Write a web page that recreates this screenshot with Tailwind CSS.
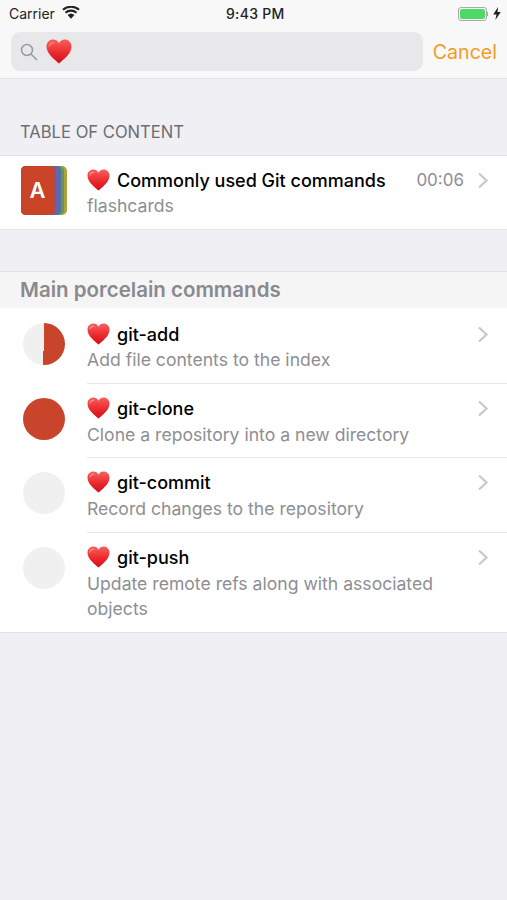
<!DOCTYPE html>
<html lang="en">
<head>
    <meta charset="UTF-8">
    <meta name="viewport" content="width=device-width, initial-scale=1.0">
    <title>Search</title>
    <script src="https://cdn.jsdelivr.net/npm/@tailwindcss/browser@4"></script>
</head>
<body class="bg-[#efeff4] h-[900px] overflow-hidden font-['Inter','Liberation_Sans',sans-serif]">
    <svg width="0" height="0" class="absolute">
        <defs>
            <linearGradient id="heartFill" x1="0" y1="0" x2="0" y2="1">
                <stop offset="0" stop-color="#f8605c"/>
                <stop offset="0.6" stop-color="#e9262a"/>
                <stop offset="1" stop-color="#d0101a"/>
            </linearGradient>
            <symbol id="heart" viewBox="0 0 24 23">
                <path d="M12 22.500C9 19.500.5 14 .5 7 .5 3 3.300.5 6.700.5c2.300 0 4.200 1.200 5.300 3.300C13.100 1.700 15 .5 17.300.5c3.400 0 6.200 2.500 6.200 6.500C23.500 14 15 19.500 12 22.500z" fill="url(#heartFill)"/>
                <path d="M3 6.500C3.500 4.500 5 3.300 7 3.300" fill="none" stroke="#fff" stroke-opacity=".35" stroke-width="1.200" stroke-linecap="round"/>
            </symbol>
        </defs>
    </svg>

    <!-- nav -->
    <header class="bg-[#f8f8f8] h-[78px]">
        <div class="h-[27px] relative flex items-center justify-between pl-[9px] pr-[6px] text-[14px] text-[#222]">
            <div class="flex items-center gap-[7px]">
                <span>Carrier</span>
                <svg width="18" height="13" viewBox="0 0 17 12" class="mb-[2px]"><path d="M8.500 12 5.300 8.400a4.800 4.800 0 0 1 6.400 0z" fill="#222"/><path d="M3.300 6.200a7.800 7.800 0 0 1 10.400 0M.9 3.400a11.700 11.700 0 0 1 15.200 0" fill="none" stroke="#222" stroke-width="2"/></svg>
            </div>
            <span class="absolute left-[226px] font-medium tracking-[0.3px]">9:43 PM</span>
            <div class="flex items-center gap-[5px]">
                <div class="flex items-center">
                    <div class="w-[29px] h-[14px] rounded-[3px] border border-[#aaa] p-[1px]"><div class="h-full rounded-[2px] bg-[#4cd964]"></div></div>
                    <div class="w-[1px] h-[4px] bg-[#aaa]"></div>
                </div>
                <svg width="8" height="13" viewBox="0 0 7 12"><path d="M4.500 0 0 7h3l-1 5 5-7.500H4z" fill="#222"/></svg>
            </div>
        </div>
        <div class="flex items-center pl-[11px] pr-[10px] gap-[10px] mt-[5px]">
            <div class="flex-1 h-[39px] bg-[#e8e8ea] rounded-[9px] flex items-center pl-[9px] gap-[8px]">
                <svg width="18" height="18" viewBox="0 0 18 18" fill="none" stroke="#9a9a9f" stroke-width="1.500"><circle cx="7" cy="7" r="5.500"/><path d="M11 11l6 6"/></svg>
                <svg class="w-[26px] h-[25px]"><use href="#heart"/></svg>
            </div>
            <span class="text-[#f59a23] text-[19.600px] leading-none mt-[3px]">Cancel</span>
        </div>
    </header>

    <main>
        <div class="h-[77px] border-t border-[#e4e4e8] flex items-end pl-[20px] pb-[13px] text-[16.600px] leading-[20px] text-[#6d6d72]">TABLE OF CONTENT</div>

        <section class="bg-white h-[75px] border-y border-[#e3e3e6] flex">
            <div class="w-[87px] flex items-start pl-[21px] pt-[10px] shrink-0">
                <div class="relative w-[46px] h-[49px]">
                    <div class="absolute inset-0 rounded-[5px] bg-[#a9a53c]"></div>
                    <div class="absolute left-0 top-0 bottom-0 w-[43px] rounded-[5px] bg-[#5a9a58]"></div>
                    <div class="absolute left-0 top-0 bottom-0 w-[40px] rounded-[5px] bg-[#5f68a8]"></div>
                    <div class="absolute left-0 top-0 bottom-0 w-[35px] rounded-[5px] bg-[#a84a62]"></div>
                    <div class="absolute left-0 top-0 bottom-0 w-[33px] rounded-[5px] bg-[#c94326] flex items-center justify-center text-white font-semibold text-[22px]">A</div>
                </div>
            </div>
            <div class="flex-1 pt-[11px]">
                <div class="flex items-center h-[26px]">
                    <svg class="w-[23px] h-[22px] mr-[7px]"><use href="#heart"/></svg>
                    <span class="text-[18px] font-medium text-black">Commonly used Git commands</span>
                    <span class="ml-auto text-[17px] text-[#8e8e93] mt-[1px]">00:06</span>
                    <svg width="12" height="17" viewBox="0 0 12 17" fill="none" stroke="#c7c7cc" stroke-width="2.200" class="ml-[13px] mr-[18px]"><path d="M2 1.500l7.500 7-7.500 7"/></svg>
                </div>
                <div class="text-[17.600px] leading-[26px] text-[#8e8e93]">flashcards</div>
            </div>
        </section>

        <div class="h-[41px]"></div>

        <div class="h-[37px] bg-[#f5f5f6] border-t border-[#e3e3e6] flex items-center pl-[20px] text-[20.500px] font-semibold text-[#8a8a8e]">Main porcelain commands</div>

        <section class="bg-white border-b border-[#e3e3e6]">
            <div class="flex h-[76px]">
                <div class="w-[87px] shrink-0 pl-[23px] pt-[15px]">
                    <div class="w-[42px] h-[42px] rounded-full bg-[conic-gradient(#c8442a_0_184deg,#f0f0f0_184deg)]"></div>
                </div>
                <div class="flex-1 pt-[13px] border-b border-[#e8e8ea]">
                    <div class="flex items-center h-[26px]">
                        <svg class="w-[23px] h-[22px] mr-[7px]"><use href="#heart"/></svg>
                        <span class="text-[18px] font-medium text-black">git-add</span>
                        <svg width="12" height="17" viewBox="0 0 12 17" fill="none" stroke="#c7c7cc" stroke-width="2.200" class="ml-auto mr-[18px]"><path d="M2 1.500l7.500 7-7.500 7"/></svg>
                    </div>
                    <div class="text-[17.600px] leading-[26px] text-[#8e8e93]">Add file contents to the index</div>
                </div>
            </div>
            <div class="flex h-[74px]">
                <div class="w-[87px] shrink-0 pl-[23px] pt-[14px]">
                    <div class="w-[42px] h-[42px] rounded-full bg-[#c8442a]"></div>
                </div>
                <div class="flex-1 pt-[11px] border-b border-[#e8e8ea]">
                    <div class="flex items-center h-[26px] mb-[1px]">
                        <svg class="w-[23px] h-[22px] mr-[7px]"><use href="#heart"/></svg>
                        <span class="text-[18px] font-medium text-black">git-clone</span>
                        <svg width="12" height="17" viewBox="0 0 12 17" fill="none" stroke="#c7c7cc" stroke-width="2.200" class="ml-auto mr-[18px]"><path d="M2 1.500l7.500 7-7.500 7"/></svg>
                    </div>
                    <div class="text-[17.600px] leading-[26px] text-[#8e8e93]">Clone a repository into a new directory</div>
                </div>
            </div>
            <div class="flex h-[75px]">
                <div class="w-[87px] shrink-0 pl-[23px] pt-[14px]">
                    <div class="w-[42px] h-[42px] rounded-full bg-[#f0f0f0]"></div>
                </div>
                <div class="flex-1 pt-[11px] border-b border-[#e8e8ea]">
                    <div class="flex items-center h-[26px] mb-[1px]">
                        <svg class="w-[23px] h-[22px] mr-[7px]"><use href="#heart"/></svg>
                        <span class="text-[18px] font-medium text-black">git-commit</span>
                        <svg width="12" height="17" viewBox="0 0 12 17" fill="none" stroke="#c7c7cc" stroke-width="2.200" class="ml-auto mr-[18px]"><path d="M2 1.500l7.500 7-7.500 7"/></svg>
                    </div>
                    <div class="text-[17.600px] leading-[26px] text-[#8e8e93]">Record changes to the repository</div>
                </div>
            </div>
            <div class="flex h-[99px]">
                <div class="w-[87px] shrink-0 pl-[23px] pt-[14px]">
                    <div class="w-[42px] h-[42px] rounded-full bg-[#f0f0f0]"></div>
                </div>
                <div class="flex-1 pt-[11px]">
                    <div class="flex items-center h-[26px] mb-[1px]">
                        <svg class="w-[23px] h-[22px] mr-[7px]"><use href="#heart"/></svg>
                        <span class="text-[18px] font-medium text-black">git-push</span>
                        <svg width="12" height="17" viewBox="0 0 12 17" fill="none" stroke="#c7c7cc" stroke-width="2.200" class="ml-auto mr-[18px]"><path d="M2 1.500l7.500 7-7.500 7"/></svg>
                    </div>
                    <div class="text-[17.600px] leading-[25px] text-[#8e8e93] pr-[60px]">Update remote refs along with associated objects</div>
                </div>
            </div>
        </section>
    </main>
</body>
</html>
